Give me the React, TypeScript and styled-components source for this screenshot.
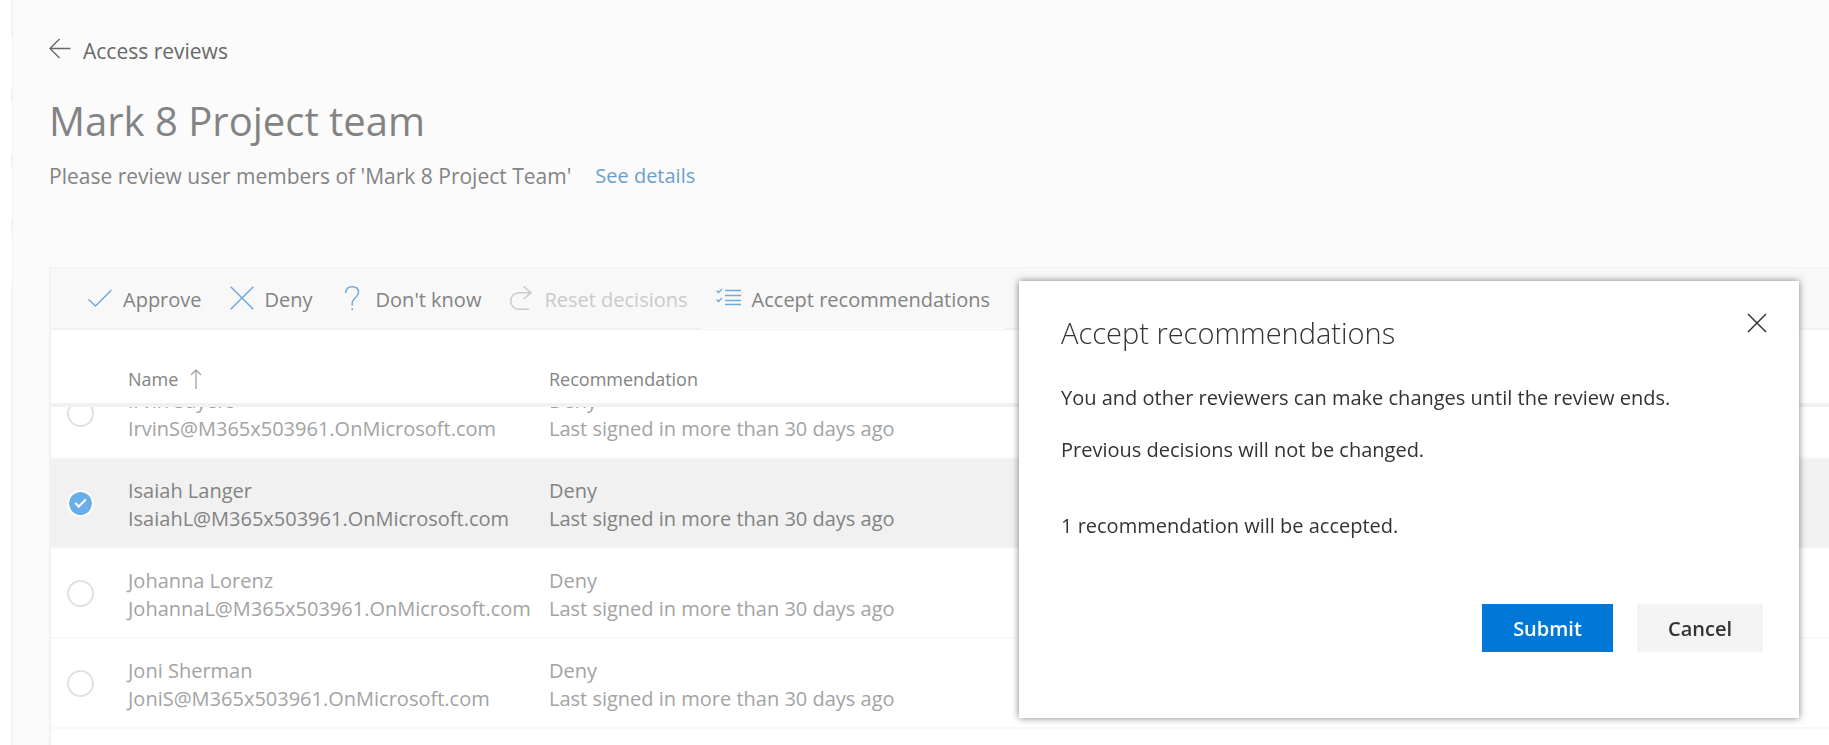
import React, { useLayoutEffect, useRef, useState } from 'react';
import styled, { createGlobalStyle } from 'styled-components';

const GlobalStyle = createGlobalStyle`
  *, *::before, *::after { box-sizing: border-box; }
  body {
    margin: 0;
    background: #ffffff;
    color: #838383;
    font-family: 'Segoe UI', 'Open Sans', 'Noto Sans', sans-serif;
    font-size: 20px;
    line-height: 28px;
  }
  button { font: inherit; color: inherit; border: 0; padding: 0; background: none; cursor: pointer; }
  h1, h2, p { margin: 0; }
  svg { display: block; flex: none; }
`;

const Shell = styled.div`
  display: flex;
  height: 100vh;
  overflow: hidden;
`;

const Rail = styled.div`
  display: flex;
  flex: none;
  flex-direction: column;
  gap: 12px;
  width: 12px;
  padding-top: 35px;
  border-right: 1px solid #f1f1f1;
`;

const RailItem = styled.div`
  height: 54px;
  margin-right: -1px;
  background: #ffffff;
`;

const Page = styled.main`
  display: flex;
  flex: 1;
  flex-direction: column;
  min-width: 0;
  padding: 37px 0 0 36px;
  border-left: 1px solid #f1f1f1;
  background: #fbfbfb;
`;

const BackLink = styled.a`
  display: flex;
  align-self: flex-start;
  gap: 12px;
  color: #686868;
  font-size: 21px;
  text-decoration: none;
`;

const Title = styled.h1`
  margin-top: 28px;
  font-size: 40px;
  font-weight: 400;
  line-height: 56px;
`;

const Summary = styled.p`
  display: flex;
  gap: 24px;
  margin-top: 13px;
  font-size: 21px;
`;

const DetailsLink = styled.a`
  color: #6c9fcd;
  font-size: 20px;
  text-decoration: none;
`;

const Card = styled.section`
  display: flex;
  flex: 1;
  flex-direction: column;
  min-height: 0;
  margin-top: 77px;
  border-top: 1px solid #f0f0f0;
  border-left: 2px solid #f1f1f1;
  background: #ffffff;
`;

const Toolbar = styled.div`
  display: flex;
  height: 62px;
  padding-left: 23px;
  border-bottom: 2px solid #f1f1f1;
  background: #f8f8f8;
`;

const Command = styled.button<{ $active?: boolean }>`
  display: flex;
  align-items: center;
  gap: 11px;
  height: 61px;
  padding: 0 14px;
  border-bottom: 1px solid ${(p) => (p.$active ? '#ffffff' : 'transparent')};

  &:disabled { color: #cacaca; cursor: default; }
`;

const CommandLabel = styled.span`
  padding-top: 3px;
`;

const Scroller = styled.div`
  flex: 1;
  min-height: 0;
  padding-bottom: 80px;
  overflow-y: auto;
  scrollbar-width: none;
`;

const Table = styled.table`
  width: 100%;
  border-spacing: 0;
  table-layout: fixed;
  text-align: left;
`;

const HeadCell = styled.th<{ $width?: number }>`
  position: sticky;
  top: 0;
  z-index: 1;
  width: ${(p) => (p.$width ? `${p.$width}px` : 'auto')};
  height: 77px;
  padding: 24px 0 0;
  border-bottom: 4px solid #f1f1f1;
  background: #ffffff;
  font-size: 18px;
  font-weight: 400;
`;

const SortLabel = styled.span`
  display: flex;
  align-items: center;
  gap: 12px;
`;

const Row = styled.tr<{ $selected: boolean }>`
  color: ${(p) => (p.$selected ? '#838383' : '#a3a3a3')};
  background: ${(p) => (p.$selected ? '#f1f1f1' : '#ffffff')};
`;

const Cell = styled.td`
  height: 90px;
  padding: 4px 0 0;
  border-bottom: 2px solid #f8f8f8;
  white-space: nowrap;
`;

const CheckCell = styled(Cell)`
  padding: 0 0 0 16px;
`;

const RowCheck = styled.input`
  display: grid;
  place-items: center;
  width: 27px;
  height: 27px;
  margin: 0;
  border: 2px solid #e1e1e1;
  border-radius: 50%;
  appearance: none;
  background: #ffffff;

  &:checked { border-color: #ffffff; background: #68aee8; background-clip: padding-box; }
  &:checked::after {
    content: '';
    width: 11px;
    height: 6px;
    margin-bottom: 3px;
    border: solid #ffffff;
    border-width: 0 0 2px 2px;
    transform: rotate(-45deg);
  }
`;

const Dialog = styled.div`
  position: fixed;
  top: 281px;
  right: 30px;
  z-index: 2;
  width: 780px;
  padding: 32px 36px 66px 42px;
  background: #ffffff;
  color: #333333;
  box-shadow: 0 0 7px rgba(0, 0, 0, 0.5);
`;

const DialogHead = styled.div`
  display: flex;
  justify-content: space-between;
  align-items: flex-start;
`;

const DialogTitle = styled.h2`
  font-size: 29px;
  font-weight: 300;
  line-height: 40px;
`;

const CloseButton = styled.button`
  margin-right: -4px;
`;

const DialogText = styled.div`
  display: flex;
  flex-direction: column;
  gap: 24px;
  margin-top: 31px;
`;

const Outcome = styled.p`
  margin-top: 24px;
`;

const Actions = styled.div`
  display: flex;
  justify-content: flex-end;
  gap: 24px;
  margin-top: 64px;
`;

const ActionButton = styled.button<{ $primary?: boolean }>`
  width: ${(p) => (p.$primary ? 131 : 126)}px;
  height: 48px;
  padding-top: 2px;
  background: ${(p) => (p.$primary ? '#0078d7' : '#f4f4f4')};
  color: ${(p) => (p.$primary ? '#ffffff' : '#333333')};
  font-weight: 600;
`;

const blue = '#6fa8dc';

const BackIcon = () => (
  <svg width="22" height="24" viewBox="0 0 22 24" fill="none" stroke="#686868" strokeWidth="1.4" aria-hidden="true">
    <path d="M21.500 11.500H1M10.500 2L1 11.500l9.500 9.500" />
  </svg>
);

const CheckIcon = () => (
  <svg width="24" height="24" viewBox="0 0 24 24" fill="none" stroke={blue} strokeWidth="1.5" aria-hidden="true">
    <path d="M.5 13.500l7 6.500L23.500 4" />
  </svg>
);

const DenyIcon = () => (
  <svg width="24" height="24" viewBox="0 0 24 24" fill="none" stroke={blue} strokeWidth="1.5" aria-hidden="true">
    <path d="M.7.7l22.600 22.600M23.300.7L.7 23.300" />
  </svg>
);

const QuestionIcon = () => (
  <svg width="24" height="24" viewBox="0 0 24 24" fill="none" stroke={blue} strokeWidth="1.5" aria-hidden="true">
    <path d="M4.700 7C4.700 3 7 .8 11 .8s6.500 2.200 6.500 5.700c0 5-6.300 5.500-6.300 10.500v2.500M11.200 22v2" />
  </svg>
);

const ResetIcon = () => (
  <svg width="24" height="24" viewBox="0 0 24 24" fill="none" stroke="#cacaca" strokeWidth="1.500" aria-hidden="true">
    <path d="M20 23.200H10C5 23.200 1.700 19.500 1.700 15S5 6.700 10 6.700h12M14.500.5L22 6.700l-7.500 6.300" />
  </svg>
);

const ListIcon = () => (
  <svg width="25" height="24" viewBox="0 0 25 24" fill="none" stroke={blue} aria-hidden="true">
    <path strokeWidth="1.500" d="M9 4.500h16M9 9.500h16M9 14.500h16M9 18.500h16" />
    <path strokeWidth="1.300" d="M.5 4.500l2 2L6 3M.5 13.500l2 2L6 12" />
  </svg>
);

const SortIcon = () => (
  <svg width="12" height="20" viewBox="0 0 12 20" fill="none" stroke="#a3a3a3" strokeWidth="1.300" aria-hidden="true">
    <path d="M6 20V1M1 6l5-5 5 5" />
  </svg>
);

const CloseIcon = () => (
  <svg width="20" height="20" viewBox="0 0 20 20" fill="none" stroke="#333333" strokeWidth="1.500" aria-hidden="true">
    <path d="M1 1l18 18M19 1L1 19" />
  </svg>
);

const commands = [
  { label: 'Approve', icon: <CheckIcon /> },
  { label: 'Deny', icon: <DenyIcon /> },
  { label: "Don't know", icon: <QuestionIcon /> },
  { label: 'Reset decisions', icon: <ResetIcon />, disabled: true },
  { label: 'Accept recommendations', icon: <ListIcon />, active: true },
];

const members = [
  { name: 'Irvin Sayers', email: 'IrvinS@M365x503961.OnMicrosoft.com' },
  { name: 'Isaiah Langer', email: 'IsaiahL@M365x503961.OnMicrosoft.com' },
  { name: 'Johanna Lorenz', email: 'JohannaL@M365x503961.OnMicrosoft.com' },
  { name: 'Joni Sherman', email: 'JoniS@M365x503961.OnMicrosoft.com' },
];

export default function App() {
  const scroller = useRef<HTMLDivElement>(null);
  const [selected, setSelected] = useState('Isaiah Langer');

  useLayoutEffect(() => {
    if (scroller.current) scroller.current.scrollTop = 38;
  }, []);

  return (
    <>
      <GlobalStyle />
      <Shell>
        <Rail>
          <RailItem />
          <RailItem />
          <RailItem />
          <RailItem />
        </Rail>
        <Page>
          <BackLink href="#reviews"><BackIcon />Access reviews</BackLink>
          <Title>Mark 8 Project team</Title>
          <Summary>
            Please review user members of 'Mark 8 Project Team'
            <DetailsLink href="#details">See details</DetailsLink>
          </Summary>
          <Card>
            <Toolbar role="toolbar">
              {commands.map((c) => (
                <Command key={c.label} disabled={c.disabled} $active={c.active}>
                  {c.icon}
                  <CommandLabel>{c.label}</CommandLabel>
                </Command>
              ))}
            </Toolbar>
            <Scroller ref={scroller}>
              <Table>
                <thead>
                  <tr>
                    <HeadCell $width={77} />
                    <HeadCell $width={421}><SortLabel>Name<SortIcon /></SortLabel></HeadCell>
                    <HeadCell>Recommendation</HeadCell>
                  </tr>
                </thead>
                <tbody>
                  {members.map((m) => (
                    <Row key={m.name} $selected={m.name === selected}>
                      <CheckCell>
                        <RowCheck
                          type="checkbox"
                          aria-label={m.name}
                          checked={m.name === selected}
                          onChange={() => setSelected(m.name === selected ? '' : m.name)}
                        />
                      </CheckCell>
                      <Cell>{m.name}<br />{m.email}</Cell>
                      <Cell>Deny<br />Last signed in more than 30 days ago</Cell>
                    </Row>
                  ))}
                </tbody>
              </Table>
            </Scroller>
          </Card>
        </Page>
      </Shell>
      <Dialog role="dialog" aria-labelledby="dialog-title">
        <DialogHead>
          <DialogTitle id="dialog-title">Accept recommendations</DialogTitle>
          <CloseButton aria-label="Close"><CloseIcon /></CloseButton>
        </DialogHead>
        <DialogText>
          <p>You and other reviewers can make changes until the review ends.</p>
          <p>Previous decisions will not be changed.</p>
          <Outcome>1 recommendation will be accepted.</Outcome>
        </DialogText>
        <Actions>
          <ActionButton $primary>Submit</ActionButton>
          <ActionButton>Cancel</ActionButton>
        </Actions>
      </Dialog>
    </>
  );
}
